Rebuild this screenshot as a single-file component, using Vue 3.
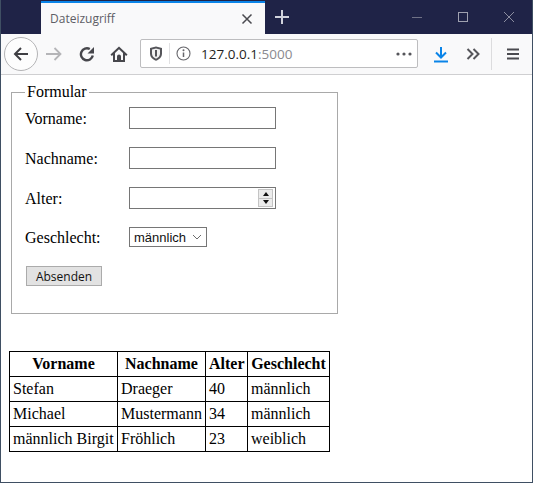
<script setup>
const rows = [
  ['Stefan', 'Draeger', '40', 'männlich'],
  ['Michael', 'Mustermann', '34', 'männlich'],
  ['männlich Birgit', 'Fröhlich', '23', 'weiblich'],
]
</script>

<template>
  <div class="window">
    <div class="tabbar">
      <div class="tab">
        <span class="tab-title">Dateizugriff</span>
        <svg class="tab-close" width="12" height="12" viewBox="0 0 12 12"><path d="M1.500 1.500l9 9M10.500 1.500l-9 9" stroke="#4a4a4f" stroke-width="1.500" fill="none"/></svg>
      </div>
      <svg class="newtab" width="16" height="16" viewBox="0 0 16 16"><path d="M8 1v14M1 8h14" stroke="#d0d2dc" stroke-width="2" fill="none"/></svg>
      <div class="winctl">
        <svg width="12" height="12" viewBox="0 0 12 12"><path d="M1 6.500h10" stroke="#6f7186" fill="none"/></svg>
        <svg width="12" height="12" viewBox="0 0 12 12"><rect x="1.500" y="1.500" width="9" height="9" stroke="#9fa1b0" fill="none"/></svg>
        <svg width="12" height="12" viewBox="0 0 12 12"><path d="M1 1l10 10M11 1L1 11" stroke="#8b8da0" fill="none"/></svg>
      </div>
    </div>

    <div class="toolbar">
      <div class="backbtn">
        <svg width="18" height="18" viewBox="0 0 18 18"><path d="M16 9H3M9 3L3 9l6 6" stroke="#3f3f44" stroke-width="2" fill="none"/></svg>
      </div>
      <svg class="fwd" width="18" height="16" viewBox="0 0 18 16"><path d="M1 8h14M9.500 2l6 6-6 6" stroke="#b5b5b8" stroke-width="1.800" fill="none"/></svg>
      <svg class="reload" width="16" height="16" viewBox="0 0 16 16"><path d="M13.800 9.500A6 6 0 1 1 10.800 3" stroke="#47474c" stroke-width="2.400" fill="none"/><path d="M15 1v6.500H8.500z" fill="#47474c"/></svg>
      <svg class="home" width="18" height="17" viewBox="0 0 18 17"><path d="M9 0.500L0.500 8.500 1.800 10 3 9V16H15V9l1.200 1 1.300-1.500z" fill="#47474c"/><path d="M9 3.300L5 7v7h2v-3.500a2 2 0 0 1 4 0V14h2V7z" fill="#f9f9fa"/><path d="M8 10.500h2V14H8z" fill="#47474c"/></svg>
      <div class="urlbar">
        <svg class="shield" width="14" height="15" viewBox="0 0 14 15"><path d="M7 0.500L13 2V7.500C13 11 10.500 13.500 7 14.800 3.500 13.500 1 11 1 7.500V2z" fill="#55555a"/><path d="M7 2.500L11 3.500V7.500C11 10 9.300 11.700 7 12.700 4.700 11.700 3 10 3 7.500V3.500z" fill="#f1f1f2"/><path d="M6 4h2v6.500H6z" fill="#55555a"/></svg>
        <span class="urlsep"></span>
        <svg class="info" width="15" height="15" viewBox="0 0 15 15"><circle cx="7.500" cy="7.500" r="6.500" stroke="#66666b" stroke-width="1.100" fill="none"/><path d="M7.500 6.500v4.500" stroke="#66666b" stroke-width="1.500"/><circle cx="7.500" cy="4.300" r="1" fill="#66666b"/></svg>
        <span class="url">127.0.0.1<span class="port">:5000</span></span>
        <svg class="dots" width="16" height="4" viewBox="0 0 16 4"><circle cx="2" cy="2" r="1.600" fill="#55555a"/><circle cx="8" cy="2" r="1.600" fill="#55555a"/><circle cx="14" cy="2" r="1.600" fill="#55555a"/></svg>
      </div>
      <svg class="download" width="16" height="17" viewBox="0 0 16 17"><path d="M8 1v10M3 6.500L8 11.500l5-5" stroke="#0a84e8" stroke-width="2" fill="none"/><path d="M1 15.500h14" stroke="#0a84e8" stroke-width="2"/></svg>
      <svg class="more" width="14" height="12" viewBox="0 0 14 12"><path d="M1.500 1l5 5-5 5M7.500 1l5 5-5 5" stroke="#55555a" stroke-width="2" fill="none"/></svg>
      <span class="toolsep"></span>
      <svg class="menu" width="14" height="12" viewBox="0 0 14 12"><path d="M1 1.500h12M1 6h12M1 10.500h12" stroke="#4a4a4f" stroke-width="2" fill="none"/></svg>
    </div>

    <div class="page">
      <fieldset class="form">
        <legend>Formular</legend>
        <div class="row">
          <label>Vorname:</label>
          <input class="field" type="text" />
        </div>
        <div class="row">
          <label>Nachname:</label>
          <input class="field" type="text" />
        </div>
        <div class="row">
          <label>Alter:</label>
          <div class="number">
            <input class="field" type="text" />
            <div class="spin">
              <span class="spin-btn"><i class="up"></i></span>
              <span class="spin-btn"><i class="down"></i></span>
            </div>
          </div>
        </div>
        <div class="row row-select">
          <label>Geschlecht:</label>
          <div class="select">
            <span>männlich</span>
            <svg width="10" height="6" viewBox="0 0 10 6"><path d="M1 1l4 4 4-4" stroke="#6d6d6d" fill="none"/></svg>
          </div>
        </div>
        <button class="submit" type="button">Absenden</button>
      </fieldset>

      <table class="data">
        <colgroup>
          <col class="c1" /><col class="c2" /><col class="c3" /><col class="c4" />
        </colgroup>
        <thead>
          <tr>
            <th>Vorname</th>
            <th>Nachname</th>
            <th>Alter</th>
            <th>Geschlecht</th>
          </tr>
        </thead>
        <tbody>
          <tr v-for="r in rows" :key="r[0]">
            <td v-for="c in r" :key="c">{{ c }}</td>
          </tr>
        </tbody>
      </table>
    </div>
  </div>
</template>

<style>
html, body { margin: 0; padding: 0; background: #fff; }
</style>

<style scoped>
.window {
  width: 533px;
  height: 483px;
  box-sizing: border-box;
  border: 1px solid #3f4f63;
  border-top: 0;
  display: flex;
  flex-direction: column;
  overflow: hidden;
  background: #fff;
  font-family: "Liberation Serif", serif;
}
.tabbar {
  height: 34px;
  flex: none;
  background: #1f2347;
  display: flex;
  align-items: stretch;
  padding-left: 40px;
}
.tab {
  width: 224px;
  box-sizing: border-box;
  margin-top: 1px;
  border-top: 2px solid #0a84e8;
  background: #f9f9fa;
  display: flex;
  align-items: center;
  justify-content: space-between;
  padding: 0 12px 0 9px;
}
.tab-title {
  font: 12px "Open Sans", "Noto Sans", sans-serif;
  color: #5e5e66;
}
.tab-close { display: block; }
.newtab { align-self: center; margin-left: 9px; }
.winctl {
  margin-left: auto;
  display: flex;
  align-items: center;
  gap: 34px;
  padding-right: 17px;
}
.toolbar {
  height: 41px;
  flex: none;
  box-sizing: border-box;
  background: #f9f9fa;
  border-bottom: 1px solid #cfcfd1;
  display: flex;
  align-items: center;
  padding-left: 3px;
}
.backbtn {
  width: 34px;
  height: 34px;
  box-sizing: border-box;
  border: 1px solid #b4b4b6;
  border-radius: 50%;
  background: #fdfdfd;
  display: flex;
  align-items: center;
  justify-content: center;
  flex: none;
}
.fwd { margin-left: 7px; flex: none; }
.reload { margin-left: 16px; flex: none; }
.home { margin-left: 15px; flex: none; }
.urlbar {
  margin-left: 12px;
  margin-bottom: 1px;
  width: 278px;
  height: 29px;
  box-sizing: border-box;
  border: 1px solid #bdbdbf;
  border-radius: 2px;
  background: #fff;
  display: flex;
  align-items: center;
  padding-left: 8px;
  flex: none;
}
.shield { flex: none; }
.urlsep { width: 1px; height: 21px; background: #e1e1e3; margin-left: 6px; }
.info { margin-left: 6px; flex: none; }
.url {
  margin-left: 10px;
  font: 13.5px "Open Sans", "Noto Sans", sans-serif;
  color: #1f1f23;
}
.port { color: #8a8a8f; }
.dots { margin-left: auto; margin-right: 5px; }
.download { margin-left: 15px; flex: none; }
.more { margin-left: 17px; flex: none; }
.toolsep { width: 1px; height: 32px; background: #dcdcde; margin-left: 11px; flex: none; }
.menu { margin-left: 14px; flex: none; }

.page { padding: 8px 0 0 8px; flex: 1; font-size: 16px; color: #000; }
.form {
  width: 327px;
  height: 231px;
  box-sizing: border-box;
  margin: 0 0 0 2px;
  padding: 6px 0 0 13px;
  border: 1px solid #a9a9a9;
  min-width: 0;
}
legend {
  padding: 0 2px;
  margin-left: 0;
  line-height: 18px;
  font-size: 16px;
}
.row {
  display: flex;
  align-items: center;
  height: 22px;
  margin-bottom: 18px;
}
.row label {
  width: 104px;
  flex: none;
  position: relative;
  top: 1px;
}
.field {
  display: block;
  width: 147px;
  height: 22px;
  box-sizing: border-box;
  border: 1px solid #767676;
  background: #fff;
  padding: 0;
  margin: 0;
  outline: 0;
}
.number { position: relative; }
.spin {
  position: absolute;
  right: 3px;
  top: 2px;
  width: 15px;
  height: 18px;
  display: flex;
  flex-direction: column;
}
.spin-btn {
  flex: 1;
  box-sizing: border-box;
  background: #ececec;
  border: 1px solid #c4c4c4;
  display: flex;
  align-items: center;
  justify-content: center;
}
.spin-btn + .spin-btn { border-top: 0; }
.up, .down { width: 0; height: 0; border-left: 3.500px solid transparent; border-right: 3.500px solid transparent; }
.up { border-bottom: 4px solid #111; }
.down { border-top: 4px solid #111; }
.row-select { height: 20px; margin-bottom: 19px; }
.select {
  width: 78px;
  height: 20px;
  box-sizing: border-box;
  border: 1px solid #767676;
  background: #fff;
  display: flex;
  align-items: center;
  justify-content: space-between;
  padding: 0 4px 0 4px;
  font: 13px "Liberation Sans", Arial, sans-serif;
  color: #111;
}
.submit {
  display: block;
  width: 76px;
  height: 20px;
  margin-left: 1px;
  padding: 0;
  box-sizing: border-box;
  border: 1px solid #ababab;
  background: #e2e2e2;
  font: 12px "Open Sans", "Noto Sans", sans-serif;
  color: #111;
}
.data {
  border-collapse: collapse;
  table-layout: fixed;
  width: 320px;
  margin-top: 37px;
  font-size: 16px;
  line-height: 18px;
}
.c1 { width: 108px; }
.c2 { width: 88px; }
.c3 { width: 42px; }
.c4 { width: 82px; }
.data th, .data td {
  border: 1px solid #000;
  padding: 3px 3px;
  height: 18px;
  text-align: left;
  white-space: nowrap;
  overflow: hidden;
}
.data th { text-align: center; }
</style>
